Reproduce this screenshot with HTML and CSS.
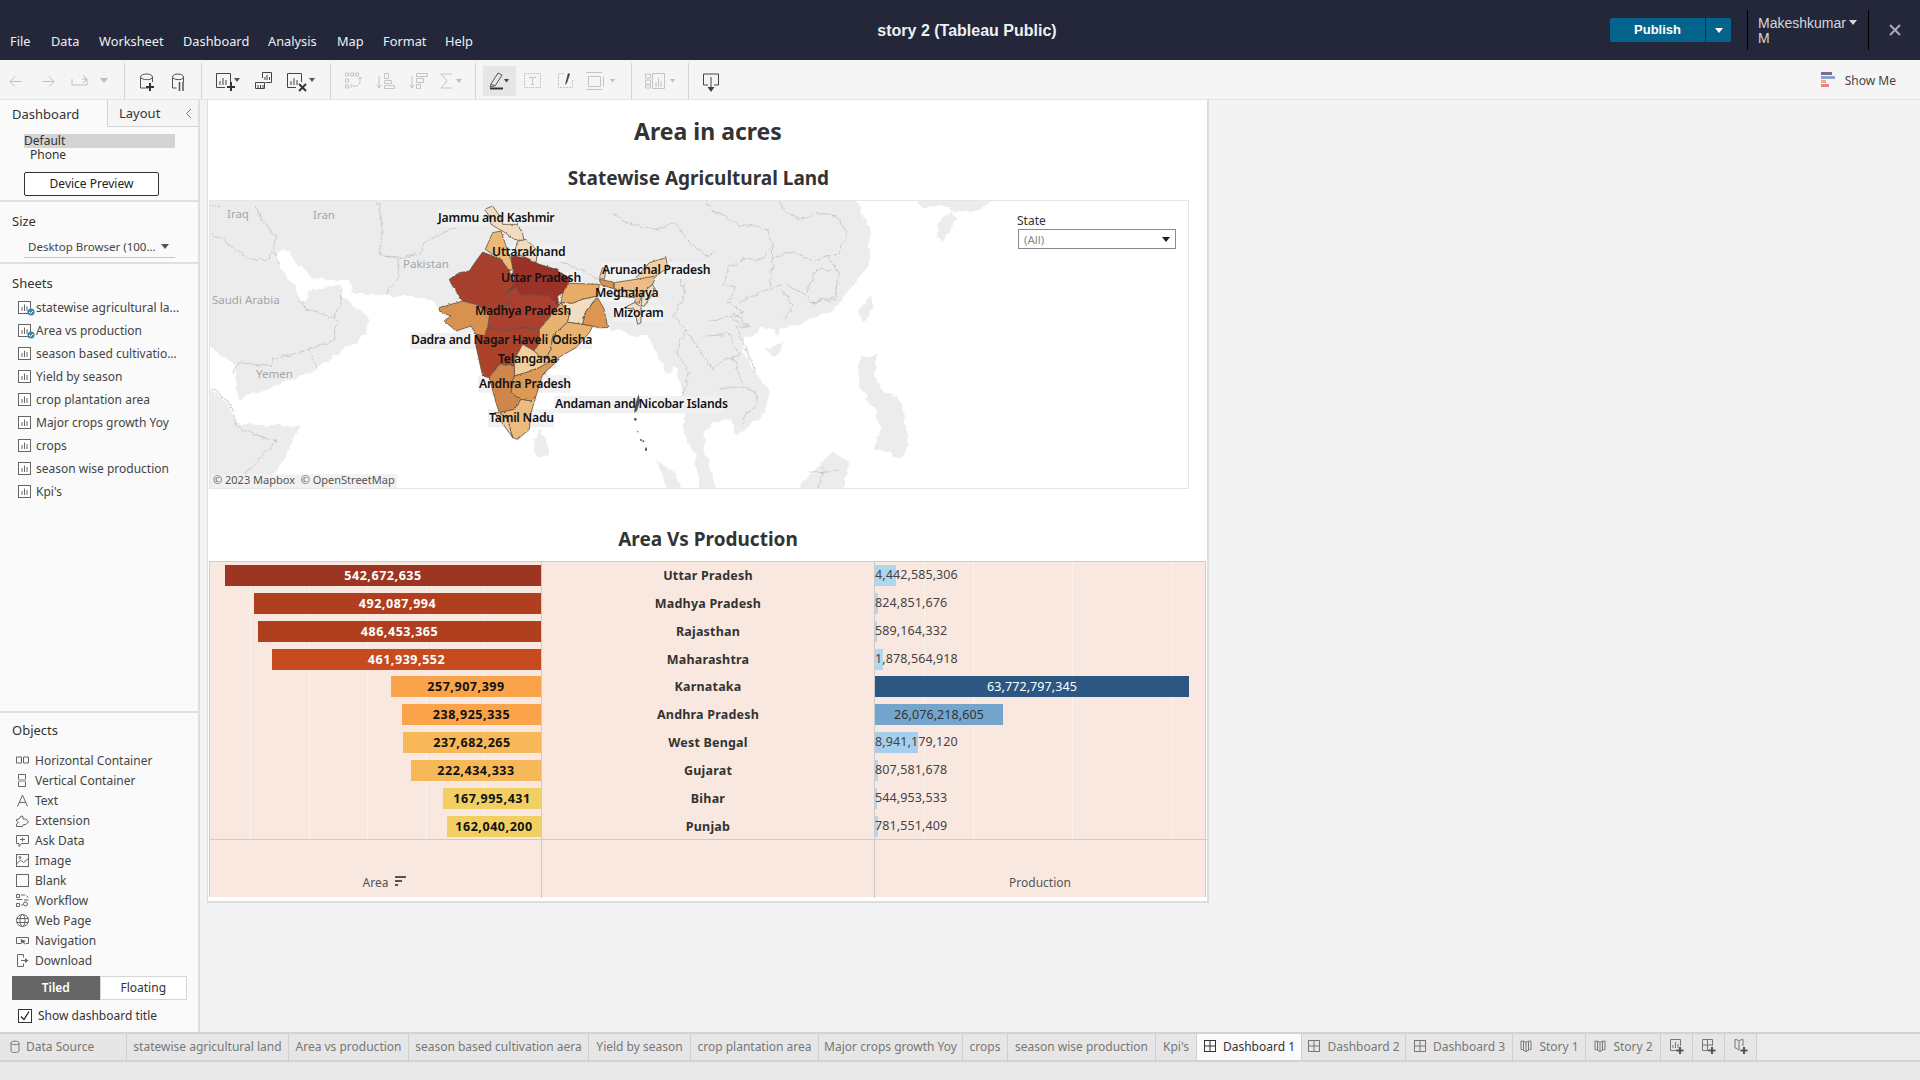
FILE: index.html
```html
<!DOCTYPE html>
<html lang="en">
<head>
<meta charset="utf-8">
<title>story 2 (Tableau Public)</title>
<link rel="stylesheet" href="styles.css">
</head>
<body>
<svg class="defs" aria-hidden="true">
  <symbol id="sheet" viewBox="0 0 14 14"><rect x=".5" y=".5" width="12" height="12" fill="#fff" stroke="#666"/><path d="M4 10V6M6.5 10V3.5M9 10V5" stroke="#666" fill="none"/></symbol>
  <symbol id="dash" viewBox="0 0 14 14"><rect x="1.5" y="1.5" width="11" height="11" fill="none" stroke="currentColor"/><path d="M7 1.5v11M1.5 7h11" stroke="currentColor"/></symbol>
  <symbol id="book" viewBox="0 0 14 14"><path d="M2 2c2 0 4 .5 5 1.500C8 2.500 10 2 12 2v8.500c-2 0-4 1-5 2.500-1-1.500-3-2.500-5-2.500zM7 3.500V13M4.500 2v9M9.500 2v9" fill="none" stroke="currentColor"/></symbol>
</svg>

<header class="topbar">
  <nav class="menu"><span>File</span><span>Data</span><span>Worksheet</span><span>Dashboard</span><span>Analysis</span><span>Map</span><span>Format</span><span>Help</span></nav>
  <div class="doc-title">story 2 (Tableau Public)</div>
  <div class="actions">
    <div class="publish"><span class="pub-main">Publish</span><span class="pub-arrow"></span></div>
    <div class="user"><span class="user-name">Makeshkumar M</span><span class="user-arrow"></span></div>
    <svg class="close" width="14" height="14" viewBox="0 0 14 14"><path d="M2 2l10 10M12 2L2 12" stroke="#a9acb4" stroke-width="2"/></svg>
  </div>
</header>

<div class="toolbar">
  <svg class="tg" width="124" height="40" viewBox="0 60 124 40" fill="none" stroke="#bdbdbd">
    <path d="M22 81.500H10M15 76.500l-5 5 5 5M42 81.500h12M49 76.500l5 5-5 5M72 79v6h15v-6h-5M83 75l4 4-4 4"/>
    <path d="M100 78h8l-4 5z" fill="#bdbdbd" stroke="none"/>
  </svg>
  <svg class="tg" width="77" height="40" viewBox="124 60 77 40" fill="none" stroke="#555">
    <path d="M140.500 77v11h8M152.500 77v5M140.500 77c0-4 12-4 12 0s-12 3-12 0z"/>
    <path d="M150 83v8M146 87h8" stroke="#333" stroke-width="2"/>
    <path d="M172.500 77v11h4M183.500 77v5M172.500 77c0-4 11-4 11 0s-11 3-11 0z"/>
    <path d="M179.500 82v9M183 82v9" stroke-width="1.500"/>
  </svg>
  <svg class="tg" width="129" height="40" viewBox="201 60 129 40" fill="none" stroke="#444">
    <path d="M225 87.500h-8.500v-14h14V82M220 85v-4M223 85v-7M226 85v-5"/>
    <path d="M231 82v9M227 87h8" stroke="#333" stroke-width="2"/>
    <path d="M234 78h6l-3 4z" fill="#555" stroke="none"/>
    <path d="M262.500 78v-5.500h9v10h-6M265 80v-3M267 80v-5M269.500 80v-3M255.500 82.500h9v6h-9zM258 88v-3M260.500 88v-3M263 88v-3"/>
    <path d="M296 87.500h-8.500v-14h14V82M291 85v-4M294 85v-7M297 85v-5"/>
    <path d="M299 84l7 7M306 84l-7 7" stroke="#333" stroke-width="1.800"/>
    <path d="M309 78h6l-3 4z" fill="#555" stroke="none"/>
  </svg>
  <svg class="tg" width="145" height="40" viewBox="330 60 145 40" fill="none" stroke="#c4c4c4">
    <path d="M345.500 73h3v3h-3zM350.500 73h3v3h-3zM355.500 73h3v3h-3zM345.500 79h3v3h-3zM345.500 85h3v3h-3zM360 78v5l-3 3h-5M350 84l2 2-2 2M358 79l2-2 2 2"/>
    <path d="M379 76v12M377 85l2 3 2-3M384.500 73.500h4v5h-4zM384.500 80.500h7v3h-7zM384.500 85.500h10v3h-10z"/>
    <path d="M412 76v12M410 85l2 3 2-3M416.500 73.500h11v3h-11zM416.500 78.500h7v4h-7zM416.500 84.500h4v4h-4z"/>
    <path d="M452 74h-11l6 7-6 7h11"/>
    <path d="M456 79h6l-3 4z" fill="#bdbdbd" stroke="none"/>
  </svg>
  <svg class="tg" width="156" height="40" viewBox="475 60 156 40" fill="none" stroke="#555">
    <rect x="483" y="66" width="33" height="30" fill="#e6e6e6" stroke="none"/>
    <path d="M491 84l7-11 4 2-7 11zM491 84l-1 3 4-1"/>
    <path d="M490 88.500h13" stroke="#333" stroke-width="2"/>
    <path d="M504 79h5l-2.500 3.500z" fill="#444" stroke="none"/>
    <g stroke="#c4c4c4">
      <rect x="524.500" y="73.500" width="16" height="14" stroke-dasharray="2 1"/>
      <path d="M529 77.500h7M532.500 77.500v7M531 84.500h3"/>
      <path d="M564 73.500h-5.500v14h14V80" stroke-dasharray="2 1"/>
      <path d="M586 72.500h16M586 89.500h16M588.500 76.500h12v10h-12zM603.500 76.500v10"/>
      <path d="M610 79h5l-2.500 3.500z" fill="#bdbdbd" stroke="none"/>
    </g>
    <path d="M565 85l3-12 2 1-3 9z" fill="#444" stroke="none"/>
  </svg>
  <svg class="tg" width="57" height="40" viewBox="631 60 57 40" fill="none" stroke="#c4c4c4">
    <path d="M645.500 74h5v4h-5zM645.500 80h5v4h-5zM645.500 85h5v3h-5zM652.500 73.500h12v15h-12zM656 87v-5M658.500 87v-9M661 87v-6"/>
    <path d="M670 79h5l-2.500 3.500z" fill="#bdbdbd" stroke="none"/>
  </svg>
  <svg class="tgl" width="60" height="40" viewBox="688 60 60 40" fill="none" stroke="#444">
    <path d="M708 85h-4.500V74h15v11H714M711 77v12"/>
    <path d="M707.500 87h7l-3.500 5z" fill="#444" stroke="none"/>
  </svg>
  <div class="showme">
    <svg width="14" height="16" viewBox="0 0 14 16"><rect width="11" height="3" fill="#7d6b94"/><rect y="4" width="14" height="3" fill="#86a5cb"/><rect y="8" width="5" height="3" fill="#f2a97e"/><rect y="12" width="8" height="3" fill="#f07f8b"/></svg>
    <span>Show Me</span>
  </div>
</div>

<div class="main">
  <aside class="side">
    <div class="side-tabs">
      <div class="stab active">Dashboard</div>
      <div class="stab layout">Layout<svg width="7" height="11" viewBox="0 0 7 11"><path d="M6 1L1.500 5.500 6 10" fill="none" stroke="#777"/></svg></div>
    </div>
    <section class="sec device">
      <div class="dev-default">Default</div>
      <div class="dev-phone">Phone</div>
      <button class="dev-btn">Device Preview</button>
    </section>
    <section class="sec size">
      <h3>Size</h3>
      <div class="size-select"><span>Desktop Browser (100...</span><i></i></div>
    </section>
    <section class="sec sheets">
      <h3>Sheets</h3>
      <ul>
        <li><span class="ico"><svg width="14" height="14"><use href="#sheet"/></svg><svg class="tick" width="8" height="8" viewBox="0 0 8 8"><circle cx="4" cy="4" r="3.600" fill="#3b87ad"/><path d="M2 4l1.500 1.500L6 3" stroke="#fff" fill="none"/></svg></span>statewise agricultural la...</li>
        <li><span class="ico"><svg width="14" height="14"><use href="#sheet"/></svg><svg class="tick" width="8" height="8" viewBox="0 0 8 8"><circle cx="4" cy="4" r="3.600" fill="#3b87ad"/><path d="M2 4l1.500 1.500L6 3" stroke="#fff" fill="none"/></svg></span>Area vs production</li>
        <li><span class="ico"><svg width="14" height="14"><use href="#sheet"/></svg></span>season based cultivatio...</li>
        <li><span class="ico"><svg width="14" height="14"><use href="#sheet"/></svg></span>Yield by season</li>
        <li><span class="ico"><svg width="14" height="14"><use href="#sheet"/></svg></span>crop plantation area</li>
        <li><span class="ico"><svg width="14" height="14"><use href="#sheet"/></svg></span>Major crops growth Yoy</li>
        <li><span class="ico"><svg width="14" height="14"><use href="#sheet"/></svg></span>crops</li>
        <li><span class="ico"><svg width="14" height="14"><use href="#sheet"/></svg></span>season wise production</li>
        <li><span class="ico"><svg width="14" height="14"><use href="#sheet"/></svg></span>Kpi's</li>
      </ul>
    </section>
    <section class="objects">
      <h3>Objects</h3>
      <ul>
        <li><svg width="13" height="13" viewBox="0 0 13 13" fill="none" stroke="#666"><path d="M.5 3h5v6h-5zM7.500 3h5v6h-5z"/></svg>Horizontal Container</li>
        <li><svg width="13" height="13" viewBox="0 0 13 13" fill="none" stroke="#666"><path d="M2.500.5h7v5h-7zM2.500 7.500h7v5h-7z"/><path d="M2.500 5h7v3h-7z" fill="#bbb" stroke="none"/></svg>Vertical Container</li>
        <li><svg width="13" height="13" viewBox="0 0 13 13" fill="none" stroke="#666"><path d="M1.500 12.500L6.500 1l5 11.500M3.500 8.500h6"/></svg>Text</li>
        <li><svg width="13" height="13" viewBox="0 0 13 13" fill="none" stroke="#666"><path d="M.5 5.500L3 5 5 2l2 .5L7 5h3l2.500 3-2.500 2.500H7.500L6.500 12.500H.5V10L2.500 8.500.5 7z"/></svg>Extension</li>
        <li><svg width="13" height="13" viewBox="0 0 13 13" fill="none" stroke="#666"><path d="M.5 1.500h12v8h-7L3 12.500v-3H.5zM4 5.500h5M6.500 3.500v4"/></svg>Ask Data</li>
        <li><svg width="13" height="13" viewBox="0 0 13 13" fill="none" stroke="#666"><rect x=".5" y=".5" width="12" height="12"/><path d="M.5 10l4-4 3 2.500 5-4"/><circle cx="4" cy="3.500" r="1"/></svg>Image</li>
        <li><svg width="13" height="13" viewBox="0 0 13 13" fill="none" stroke="#666"><rect x=".5" y=".5" width="12" height="12"/></svg>Blank</li>
        <li><svg width="13" height="13" viewBox="0 0 13 13" fill="none" stroke="#666"><path d="M.5.500h3v3h-3zM5 1h4M10.500 1.500l1.500 2M.5 5.500h6M8 6h4.500M.5 9.500h3v3h-3zM5 11h2"/><circle cx="9.500" cy="10" r="2"/></svg>Workflow</li>
        <li><svg width="13" height="13" viewBox="0 0 13 13" fill="none" stroke="#666"><circle cx="6.500" cy="6.500" r="6"/><ellipse cx="6.500" cy="6.500" rx="2.500" ry="6"/><path d="M.5 4.500h12M.5 8.500h12"/></svg>Web Page</li>
        <li><svg width="13" height="13" viewBox="0 0 13 13" fill="none" stroke="#666"><path d="M5 9.500H.5v-6h12v6H10"/><path d="M4.500 5l5.500 2-2 1 1.500 2-1 .5-1.500-2L5.500 10z" fill="#666" stroke="none"/></svg>Navigation</li>
        <li><svg width="13" height="13" viewBox="0 0 13 13" fill="none" stroke="#666"><path d="M7.500 3.500v-3h-6v12h6v-3M5 6.500h5"/><path d="M9 4l3.500 2.500L9 9z" fill="#666" stroke="none"/></svg>Download</li>
      </ul>
      <div class="mode"><span class="on">Tiled</span><span>Floating</span></div>
      <div class="show-title"><span class="check"><svg width="12" height="12" viewBox="0 0 12 12"><path d="M2 6.500l3 3L10 1.500" fill="none" stroke="#222" stroke-width="1.300"/></svg></span>Show dashboard title</div>
    </section>
  </aside>

  <main class="canvas">
    <article class="dashboard">
      <h1>Area in acres</h1>
      <h2 class="first">Statewise Agricultural Land</h2>
      <div class="map">
        <svg class="map-svg" width="979" height="288" viewBox="12 15 2937 864">
          <defs>
            <filter id="coast" filterUnits="userSpaceOnUse" x="0" y="0" width="2960" height="890">
              <feTurbulence type="fractalNoise" baseFrequency=".035" numOctaves="3" seed="4" result="n"/>
              <feDisplacementMap in="SourceGraphic" in2="n" scale="22" xChannelSelector="R" yChannelSelector="G"/>
              <feGaussianBlur stdDeviation="1.2"/>
            </filter>
            <filter id="wiggle" filterUnits="userSpaceOnUse" x="0" y="0" width="2960" height="890">
              <feTurbulence type="fractalNoise" baseFrequency=".05" numOctaves="3" seed="9" result="n"/>
              <feDisplacementMap in="SourceGraphic" in2="n" scale="18" xChannelSelector="R" yChannelSelector="G"/>
            </filter>
            <filter id="edge" filterUnits="userSpaceOnUse" x="0" y="0" width="2960" height="890">
              <feTurbulence type="fractalNoise" baseFrequency=".07" numOctaves="2" seed="2" result="n"/>
              <feDisplacementMap in="SourceGraphic" in2="n" scale="7" xChannelSelector="R" yChannelSelector="G"/>
            </filter>
          </defs>
          <g filter="url(#coast)" fill="#ececec" stroke="none">
            <path d="M-30-30H1935L1975 70 1995 120 1985 150 2000 185 1965 240 1925 290 1885 340 1815 370 1725 400 1715 425 1705 400 1665 395 1615 430 1605 460 1650 530 1690 590 1675 650 1615 700 1590 720 1570 670 1520 680 1490 720 1500 780 1550 920H1480L1470 780 1430 700 1440 610 1420 560 1405 510 1385 540 1350 470 1320 420 1290 420 1205 395 1160 400 1040 500 990 600 970 700 925 735 880 640 830 540 810 420 750 405 700 345 690 320 640 300 540 300 440 290 430 252 330 250 280 215 250 165 220 165 205 182 270 280 285 315 300 315 305 285 400 272 412 300 495 375 470 420 400 470 330 520 210 570 95 610 90 510 50 480-30 425Z"/>
            <path d="M-30 540L60 620 85 670 110 685 285 690 210 830 150 920H-30Z"/>
            <path d="M985 730L1005 700 1025 740 1030 775 1000 785 985 765Z"/>
            <path d="M1955 345L1995 300 2000 340 1972 382Z"/>
            <path d="M1680 460L1735 435 1725 465 1700 480Z"/>
            <path d="M2105-30L2150 40 2200 28 2260 50 2320 40 2440-30Z"/>
            <path d="M2190 80L2240 45 2250 70 2215 135 2200 125Z"/>
            <path d="M1965 480H2010L2010 560 2090 625 2110 750 2085 790 2055 770 2005 760 2025 700 2005 640 1955 560Z"/>
            <path d="M1745 920L1825 820 1880 765 1930 800 1905 920Z"/>
            <path d="M1355 795L1400 820 1440 920H1400Z"/>
          </g>
          <g filter="url(#wiggle)" fill="none" stroke="#bdbdbd" stroke-width="2.200">
            <path d="M15 25L45 30M150 30L165 70 210 120 205 170 220 205M15 110L70 145 125 190 180 190 205 165"/>
            <path d="M515 15L530 90 520 175 575 190 580 240 540 295M530 180L580 185 640 175 660 130 700 120 760 85"/>
            <path d="M408 280L405 320 385 365 300 340 280 310M385 365L395 385 380 435 310 460 205 490 190 510 95 500 85 530M310 460L335 520"/>
            <path d="M15 575L60 610 80 640 90 690 130 710 210 735 150 800 115 835"/>
            <path d="M1220 50L1260 80 1350 100 1410 80 1440 130 1500 180 1530 170M1000 170L1100 210 1180 250M1390 190L1440 290 1400 360 1440 400 1410 470 1450 530 1430 600"/>
            <path d="M1500 15L1520 45 1560 60 1600 90 1640 85 1680 100 1700 150 1670 185 1610 190 1570 215 1550 265 1590 270 1570 320 1610 350 1580 370 1630 395M1720 15L1740 50 1790 70 1835 50 1890 60 1925 110 1900 170 1860 180 1900 230 1890 300 1815 320"/>
            <path d="M1700 150L1700 210 1690 280 1640 300 1600 320M1700 190L1760 165 1820 195 1860 180M1690 280L1735 265 1800 295 1815 320 1890 310M1800 290L1830 220 1900 225M1730 280L1760 330 1735 370"/>
            <path d="M1510 375L1590 355 1630 395 1590 390 1620 460 1650 530M1500 420L1570 415 1600 480 1560 485 1520 520 1440 400M1540 580L1610 570 1650 590 1655 630 1620 650 1610 680M1580 480L1610 560"/>
            <path d="M1810 825L1845 830 1895 825M1850 815L1840 879"/>
          </g>
          <g fill="#f1f1f1">
            <rect x="693" y="40" width="348" height="52"/><rect x="855" y="146" width="225" height="50"/><rect x="883" y="224" width="245" height="50"/><rect x="1185" y="197" width="325" height="52"/><rect x="1165" y="270" width="190" height="48"/><rect x="805" y="324" width="285" height="48"/><rect x="1220" y="328" width="155" height="50"/><rect x="612" y="410" width="405" height="50"/><rect x="1035" y="410" width="122" height="50"/><rect x="872" y="470" width="178" height="48"/><rect x="816" y="538" width="278" height="52"/><rect x="1044" y="600" width="508" height="52"/><rect x="846" y="640" width="198" height="54"/><rect x="18" y="835" width="555" height="42"/>
          </g>
          <g filter="url(#edge)" stroke="#5d5148" stroke-width="2.400" stroke-linejoin="round">
            <path fill="#f2dcc0" d="M835 40L860 30 885 65 890 85 935 85 950 115 955 135 925 130 890 105 880 100 855 85 850 60Z"/>
            <path fill="#ecb878" d="M860 110L885 105 900 150 925 220 905 225 880 185 860 175 838 160Z"/>
            <path fill="#f2dcc0" d="M935 135L960 130 995 165 990 200 960 185 925 170Z"/>
            <path fill="#a83f2d" d="M830 168L860 180 885 190 910 225 925 262 900 292 920 325 880 325 850 358 840 345 810 325 770 315 735 262 730 250 760 230 790 225 810 195Z"/>
            <path fill="#9b3229" d="M915 180L960 185 1000 205 1050 220 1095 250 1085 265 1070 290 1055 300 1058 332 1030 300 960 295 945 300 930 275 900 292 925 262 920 220Z"/>
            <path fill="#ab412d" d="M850 358L880 325 920 325 900 292 930 275 945 300 960 295 1030 300 1058 332 1065 320 1030 365 1000 400 960 395 900 405 845 395Z"/>
            <path fill="#d9914f" d="M700 335L770 315 810 325 840 345 850 358 845 395 835 420 810 415 795 390 750 405 715 375 735 360 700 345Z"/>
            <path fill="#ad432c" d="M845 395L900 405 960 395 1000 400 1000 440 985 465 950 445 925 490 925 510 880 505 850 545 830 540 810 450 810 415 835 420Z"/>
            <path fill="#f0d09e" d="M950 445L985 465 1005 480 1040 495 1000 515 960 530 925 540 925 490Z"/>
            <path fill="#cf864c" d="M850 545L880 505 925 510 925 540 915 590 945 610 925 640 880 650 870 620Z"/>
            <path fill="#dd9a57" d="M925 540L960 530 1000 515 1040 490 1060 490 1010 535 990 600 975 615 945 610 915 590Z"/>
            <path fill="#ecbb7d" d="M925 640L945 610 975 615 990 600 975 650 970 700 935 730 920 725 905 670 880 650Z"/>
            <path fill="#f0cc9c" d="M865 650L880 650 905 670 920 725 895 690Z"/>
            <path fill="#e8b26f" d="M1030 365L1065 320 1090 355 1085 378 1040 420 1035 460 1020 485 1000 480 985 465 1000 440 1000 400Z"/>
            <path fill="#e9b370" d="M1085 378L1130 385 1160 390 1150 410 1110 455 1040 495 1020 485 1035 460 1040 420Z"/>
            <path fill="#e7ac66" d="M1095 262L1180 265 1175 300 1130 310 1100 322 1065 320 1070 290 1085 265Z"/>
            <path fill="#f3dcc0" d="M1065 320L1100 322 1130 310 1175 300 1140 345 1130 385 1085 378 1090 355Z"/>
            <path fill="#dd9550" d="M1175 305L1195 340 1205 395 1180 395 1160 390 1130 385 1140 345Z"/>
            <path fill="#dd9550" d="M1180 250L1222 258 1222 278 1185 266Z"/>
            <path fill="#f0d0a4" d="M1290 245L1330 200 1380 185 1385 215 1350 240 1300 255ZM1180 245L1190 215 1200 220 1195 250Z"/>
            <path fill="#edbd85" d="M1225 260L1290 250 1350 240 1340 265 1310 290 1300 320 1285 322 1295 285 1225 280Z"/>
            <path fill="#f3dcc0" d="M1225 282L1295 285 1285 305 1230 300ZM1310 290L1340 265 1345 285 1315 330 1305 330ZM1255 335L1285 320 1305 332 1305 380 1295 385 1285 340Z"/>
          </g>
          <g fill="#555">
            <path d="M1298 595L1302 615 1293 645 1284 650 1289 620Z"/>
            <circle cx="1288" cy="670" r="4"/><circle cx="1295" cy="707" r="2"/><circle cx="1305" cy="732" r="3"/><circle cx="1312" cy="736" r="3"/><ellipse cx="1320" cy="760" rx="3" ry="6"/>
          </g>
        </svg>
        <span class="geo g-iraq">Iraq</span><span class="geo g-iran">Iran</span><span class="geo g-pak">Pakistan</span><span class="geo g-saudi">Saudi Arabia</span><span class="geo g-yemen">Yemen</span>
        <span class="pin p-jk">Jammu and Kashmir</span>
        <span class="pin p-uk">Uttarakhand</span>
        <span class="pin p-up">Uttar Pradesh</span>
        <span class="pin p-ar">Arunachal Pradesh</span>
        <span class="pin p-me">Meghalaya</span>
        <span class="pin p-mp">Madhya Pradesh</span>
        <span class="pin p-mi">Mizoram</span>
        <span class="pin p-dn">Dadra and Nagar Haveli</span>
        <span class="pin p-od">Odisha</span>
        <span class="pin p-te">Telangana</span>
        <span class="pin p-ap">Andhra Pradesh</span>
        <span class="pin p-an">Andaman and Nicobar Islands</span>
        <span class="pin p-tn">Tamil Nadu</span>
        <span class="attrib">© 2023 Mapbox &nbsp;© OpenStreetMap</span>
        <div class="filter">
          <div class="filter-label">State</div>
          <div class="filter-box"><span>(All)</span><i></i></div>
        </div>
      </div>
      <h2 class="second">Area Vs Production</h2>
      <div class="chart">
        <div class="plot area-plot">
          <div class="row"><div class="bar dark" style="width:316px;background:#9c3522">542,672,635</div></div>
          <div class="row"><div class="bar dark" style="width:287px;background:#b03f20">492,087,994</div></div>
          <div class="row"><div class="bar dark" style="width:283px;background:#b03f20">486,453,365</div></div>
          <div class="row"><div class="bar dark" style="width:269px;background:#c84a20">461,939,552</div></div>
          <div class="row"><div class="bar" style="width:150px;background:#faa34a">257,907,399</div></div>
          <div class="row"><div class="bar" style="width:139px;background:#faa34a">238,925,335</div></div>
          <div class="row"><div class="bar" style="width:138px;background:#f7b859">237,682,265</div></div>
          <div class="row"><div class="bar" style="width:130px;background:#f7b859">222,434,333</div></div>
          <div class="row"><div class="bar" style="width:98px;background:#f1cf63">167,995,431</div></div>
          <div class="row"><div class="bar" style="width:94px;background:#f1cf63">162,040,200</div></div>
        </div>
        <div class="plot names">
          <div class="row">Uttar Pradesh</div>
          <div class="row">Madhya Pradesh</div>
          <div class="row">Rajasthan</div>
          <div class="row">Maharashtra</div>
          <div class="row">Karnataka</div>
          <div class="row">Andhra Pradesh</div>
          <div class="row">West Bengal</div>
          <div class="row">Gujarat</div>
          <div class="row">Bihar</div>
          <div class="row">Punjab</div>
        </div>
        <div class="plot prod-plot">
          <div class="row"><div class="pbar" style="width:21px;background:#add6ef"></div><span class="plabel">4,442,585,306</span></div>
          <div class="row"><div class="pbar" style="width:3px;background:#b2d8f0"></div><span class="plabel">824,851,676</span></div>
          <div class="row"><div class="pbar" style="width:2px;background:#b2d8f0"></div><span class="plabel">589,164,332</span></div>
          <div class="row"><div class="pbar" style="width:8px;background:#b2d8f0"></div><span class="plabel">1,878,564,918</span></div>
          <div class="row"><div class="pbar inner light" style="width:314px;background:#2c5783">63,772,797,345</div></div>
          <div class="row"><div class="pbar inner" style="width:128px;background:#74a6cd">26,076,218,605</div></div>
          <div class="row"><div class="pbar" style="width:43px;background:#a5cfec"></div><span class="plabel">8,941,179,120</span></div>
          <div class="row"><div class="pbar" style="width:3px;background:#b2d8f0"></div><span class="plabel">807,581,678</span></div>
          <div class="row"><div class="pbar" style="width:2px;background:#b2d8f0"></div><span class="plabel">544,953,533</span></div>
          <div class="row"><div class="pbar" style="width:3px;background:#b2d8f0"></div><span class="plabel">781,551,409</span></div>
        </div>
        <div class="foot">Area<svg class="sort" width="11" height="11" viewBox="0 0 11 11"><path d="M0 0h11v2H0zM0 4h7v2H0zM0 8h3v2H0z" fill="#555"/></svg></div>
        <div class="foot"></div>
        <div class="foot">Production</div>
      </div>
    </article>
  </main>
</div>

<footer class="tabs">
  <div class="tab ds"><svg width="10" height="13" viewBox="0 0 10 13" fill="none" stroke="#777"><path d="M1 3v8c0 2 8 2 8 0V3c0-2.500-8-2.500-8 0zM1 3.500c0 1.500 8 1.500 8 0"/></svg>Data Source</div>
  <div class="tab">statewise agricultural land</div>
  <div class="tab">Area vs production</div>
  <div class="tab">season based cultivation aera</div>
  <div class="tab">Yield by season</div>
  <div class="tab">crop plantation area</div>
  <div class="tab">Major crops growth Yoy</div>
  <div class="tab">crops</div>
  <div class="tab">season wise production</div>
  <div class="tab">Kpi's</div>
  <div class="tab cur"><svg width="14" height="14"><use href="#dash"/></svg>Dashboard 1</div>
  <div class="tab"><svg width="14" height="14"><use href="#dash"/></svg>Dashboard 2</div>
  <div class="tab"><svg width="14" height="14"><use href="#dash"/></svg>Dashboard 3</div>
  <div class="tab"><svg width="14" height="14"><use href="#book"/></svg>Story 1</div>
  <div class="tab"><svg width="14" height="14"><use href="#book"/></svg>Story 2</div>
  <div class="tab add"><svg width="18" height="18" viewBox="0 0 18 18" fill="none" stroke="#777"><path d="M10 13.500H2.500v-11h10V9M5 11V8M7.500 11V5M10 11V7"/><path d="M12 10v7M8.500 13.500h7" stroke="#555" stroke-width="2"/></svg></div>
  <div class="tab add"><svg width="18" height="18" viewBox="0 0 18 18" fill="none" stroke="#777"><path d="M10 13.500H2.500v-11h10V9M7.500 2.500v11M2.500 8h10"/><path d="M12 10v7M8.500 13.500h7" stroke="#555" stroke-width="2"/></svg></div>
  <div class="tab add"><svg width="18" height="18" viewBox="0 0 18 18" fill="none" stroke="#777"><path d="M3 2.500c1.500 0 3 .5 4 1.500 1-1 2.500-1.500 4-1.500V9M3 2.500V11c1.500 0 3 1 4 2.500M7 4v9"/><path d="M12 10v7M8.500 13.500h7" stroke="#555" stroke-width="2"/></svg></div>
</footer>
<div class="status"></div>
</body>
</html>
```
FILE: styles.css
```css
* { box-sizing: border-box; }
html, body { margin: 0; height: 100%; }
body { width: 1920px; height: 1080px; overflow: hidden; display: flex; flex-direction: column; font-family: "Noto Sans", "Open Sans", sans-serif; color: #333; background: #f3f3f3; }
.defs { position: absolute; width: 0; height: 0; }
ul { list-style: none; margin: 0; padding: 0; }
h1, h2, h3 { margin: 0; }

.topbar { height: 60px; flex: none; background: #232739; display: flex; color: #eef0f4; }
.menu { width: 877px; display: flex; align-items: flex-end; padding: 0 0 9px 10px; font-size: 12.8px; line-height: 20px; }
.menu span:nth-child(1) { width: 41px; }
.menu span:nth-child(2) { width: 48px; }
.menu span:nth-child(3) { width: 84px; }
.menu span:nth-child(4) { width: 85px; }
.menu span:nth-child(5) { width: 69px; }
.menu span:nth-child(6) { width: 46px; }
.menu span:nth-child(7) { width: 62px; }
.doc-title { width: 180px; text-align: center; font: bold 16px/61px "Liberation Sans", sans-serif; }
.actions { flex: 1; display: flex; align-items: center; padding-left: 553px; font-family: "Liberation Sans", sans-serif; }
.publish { display: flex; width: 121px; height: 24px; border-radius: 2px; overflow: hidden; background: #04648e; }
.pub-main { width: 96px; text-align: center; font-weight: bold; font-size: 13px; line-height: 24px; color: #fff; border-right: 1px solid #232739; }
.pub-arrow { flex: 1; position: relative; }
.pub-arrow::after { content: ""; position: absolute; left: 9px; top: 10px; border: 4px solid transparent; border-top: 5px solid #fff; border-bottom: 0; }
.user { width: 122px; height: 40px; margin-left: 16px; border-left: 1px solid #000; border-right: 1px solid #000; padding: 6px 0 0 10px; font-size: 14px; line-height: 15px; color: #d5d7dc; position: relative; }
.user-name { display: block; width: 90px; }
.user-arrow { position: absolute; left: 101px; top: 10px; border: 4px solid transparent; border-top: 5px solid #d5d7dc; border-bottom: 0; }
.close { margin-left: 19px; }

.toolbar { height: 40px; flex: none; background: #f5f5f5; border-bottom: 1px solid #e3e3e3; display: flex; align-items: flex-start; }
.tg { position: relative; flex: none; box-shadow: 1px 0 0 #d5d5d5; clip-path: inset(3px -1px 1px 0); }
.tgl { flex: none; }
.showme { margin-left: auto; display: flex; align-items: center; gap: 10px; height: 40px; padding: 0 24px 0 0; font-size: 12px; color: #444; }

.main { flex: 1; min-height: 0; display: flex; }
.side { width: 200px; flex: none; background: #fafafa; border-right: 2px solid #dedede; display: flex; flex-direction: column; font-size: 12px; }
.side-tabs { height: 27px; display: flex; flex: none; font-size: 13px; line-height: 28px; }
.stab.active { width: 107px; padding-left: 12px; }
.stab.layout { flex: 1; border-left: 1px solid #d5d5d5; border-bottom: 1px solid #d5d5d5; padding-left: 11px; display: flex; align-items: center; background: #f5f5f5; }
.stab.layout svg { margin-left: 25px; }
.sec { flex: none; border-bottom: 2px solid #e0e0e0; }
.device { height: 75px; padding: 7px 0 0 24px; }
.dev-default { width: 151px; height: 14px; background: #d4d4d4; line-height: 14px; font-size: 12px; }
.dev-phone { padding-left: 6px; height: 14px; line-height: 14px; margin-top: 0; }
.dev-btn { display: block; margin-top: 10px; width: 135px; height: 24px; background: #fff; border: 1px solid #333; border-radius: 2px; font: 12px/20px "Noto Sans", sans-serif; color: #222; padding: 0; }
.side h3 { font-size: 13px; font-weight: 400; color: #333; line-height: 18px; }
.size { height: 62px; padding: 10px 0 0 12px; }
.size-select { margin: 6px 0 0 12px; width: 151px; height: 22px; padding-left: 4px; border-bottom: 1px solid #c8c8c8; display: flex; justify-content: space-between; align-items: center; font-size: 11.5px; color: #444; }
.size-select i { margin-right: 6px; border: 4px solid transparent; border-top: 5px solid #555; border-bottom: 0; }
.sheets { flex: 1; padding: 10px 0 0 12px; }
.sheets ul { margin-top: 4px; padding-left: 6px; }
.sheets li { height: 23px; display: flex; align-items: center; white-space: nowrap; font-size: 12px; color: #444; }
.ico { width: 18px; height: 14px; position: relative; flex: none; }
.ico svg { display: block; }
.ico .tick { position: absolute; left: 9px; top: 7px; }
.objects { flex: none; height: 319px; padding: 8px 0 0 12px; }
.objects ul { margin-top: 11px; padding-left: 4px; }
.objects li { height: 20px; display: flex; align-items: center; gap: 6px; font-size: 12px; color: #444; white-space: nowrap; }
.mode { display: flex; width: 175px; height: 24px; margin-top: 6px; font-size: 12px; line-height: 22px; text-align: center; }
.mode span { flex: 1; border: 1px solid #d5d5d5; background: #fff; }
.mode .on { background: #666; border-color: #666; color: #fff; font-weight: 600; }
.show-title { display: flex; align-items: center; gap: 6px; margin: 7px 0 0 6px; font-size: 12px; color: #333; }
.check { width: 14px; height: 14px; border: 1px solid #333; background: #fff; display: flex; align-items: center; justify-content: center; }

.canvas { flex: 1; padding-left: 7px; background: #f3f3f3; }
.dashboard { width: 1002px; height: 803px; background: #fff; border: 1px solid #dcdcdc; border-width: 0 2px 2px 1px; padding-left: 1px; }
.dashboard h1 { height: 64px; text-align: center; font-size: 23px; font-weight: 700; line-height: 62px; color: #333; }
.dashboard h2 { height: 28px; text-align: center; font-size: 19px; font-weight: 700; line-height: 28px; color: #333; margin-bottom: 8px; }
.dashboard h2.first { padding-right: 19px; }
.dashboard h2.second { margin-top: 36px; }

.map { position: relative; width: 980px; height: 289px; border: 1px solid #e6e6e6; margin-left: 0; background: #fff; overflow: hidden; }
.map-svg { display: block; }
.geo, .pin, .attrib { position: absolute; white-space: nowrap; }
.geo { font-size: 11.5px; line-height: 16px; color: #a6a6a6; }
.g-iraq { left: 17px; top: 5px; }
.g-iran { left: 103px; top: 6px; }
.g-pak { left: 193px; top: 55px; }
.g-saudi { left: 2px; top: 91px; }
.g-yemen { left: 46px; top: 165px; }
.pin { font-size: 12.2px; letter-spacing: -.22px; font-weight: 600; line-height: 18px; color: #111; }
.p-jk { left: 228px; top: 8px; }
.p-uk { left: 282px; top: 42px; }
.p-up { left: 291px; top: 68px; }
.p-ar { left: 392px; top: 60px; }
.p-me { left: 385px; top: 83px; }
.p-mp { left: 265px; top: 101px; }
.p-mi { left: 403px; top: 103px; }
.p-dn { left: 201px; top: 130px; }
.p-od { left: 342px; top: 130px; }
.p-te { left: 288px; top: 149px; }
.p-ap { left: 269px; top: 174px; }
.p-an { left: 345px; top: 194px; }
.p-tn { left: 279px; top: 208px; }
.attrib { left: 3px; top: 271px; font-size: 11px; line-height: 16px; color: #555; }
.filter { position: absolute; left: 807px; top: 12px; width: 160px; }
.filter-label { font-size: 12px; line-height: 16px; color: #333; }
.filter-box { margin-left: 1px; height: 20px; width: 158px; border: 1px solid #8a8a8a; background: #fff; display: flex; justify-content: space-between; align-items: center; padding: 0 5px; font-size: 11.5px; color: #888; }
.filter-box i { border: 4px solid transparent; border-top: 5px solid #222; border-bottom: 0; }

.chart { display: grid; grid-template-columns: 332px 333px 332px; grid-template-rows: 278px 58px; width: 997px; height: 336px; background: #f9e8e0; border-top: 1px solid #ccc; border-left: 1px solid #ccc; border-right: 1px solid #ccc; }
.plot { display: flex; flex-direction: column; gap: 6.85px; padding-top: 3px; border-bottom: 1px solid #ccc; }
.row { height: 21px; flex: none; display: flex; position: relative; font-size: 12.5px; line-height: 21px; }
.area-plot { background-image: repeating-linear-gradient(90deg, transparent 0 57.500px, #fcf2ec 57.500px 58.500px); background-position: -17px 0; border-right: 1px solid #ccc; }
.area-plot .row { justify-content: flex-end; }
.bar { text-align: center; font-weight: 700; color: #111; letter-spacing: .55px; }
.bar.dark { color: #fff; }
.names { border-right: 1px solid #ccc; }
.names .row { justify-content: center; font-weight: 700; color: #333; letter-spacing: .2px; }
.prod-plot { background-image: repeating-linear-gradient(90deg, transparent 0 48.500px, #fcf2ec 48.500px 49.500px); }
.pbar { height: 21px; }
.pbar.inner { text-align: center; color: #333; font-size: 12.500px; letter-spacing: .1px; }
.pbar.light { color: #fff; }
.plabel { position: absolute; left: 0; top: -1px; color: #444; letter-spacing: .1px; }
.foot { display: flex; align-items: flex-end; justify-content: center; padding-bottom: 7px; font-size: 12px; line-height: 16px; color: #555; border-right: 1px solid #ccc; }
.foot:last-child { border-right: 0; padding-right: 2px; }
.sort { margin: 0 -18px 4px 7px; }

.tabs { height: 30px; flex: none; display: flex; background: #ececec; border-top: 2px solid #d2d2d2; border-bottom: 2px solid #d2d2d2; font-size: 12px; color: #777; white-space: nowrap; }
.tab { display: flex; align-items: center; justify-content: center; gap: 6px; background: #e6e6e6; border-right: 1px solid #cfcfcf; flex: none; padding-bottom: 2px; }
.tab:nth-child(1) { width: 127px; justify-content: flex-start; padding-left: 10px; }
.tab:nth-child(2) { width: 162px; }
.tab:nth-child(3) { width: 120px; }
.tab:nth-child(4) { width: 180px; }
.tab:nth-child(5) { width: 102px; }
.tab:nth-child(6) { width: 128px; }
.tab:nth-child(7) { width: 144px; }
.tab:nth-child(8) { width: 45px; }
.tab:nth-child(9) { width: 148px; }
.tab:nth-child(10) { width: 41px; }
.tab:nth-child(11) { width: 105px; }
.tab:nth-child(12) { width: 104px; }
.tab:nth-child(13) { width: 107px; }
.tab:nth-child(14) { width: 73px; }
.tab:nth-child(15) { width: 75px; }
.tab.add { width: 32px; }
.tab.cur { background: #fafafa; color: #333; }
.status { height: 18px; flex: none; background: #e9e9e9; }
```
